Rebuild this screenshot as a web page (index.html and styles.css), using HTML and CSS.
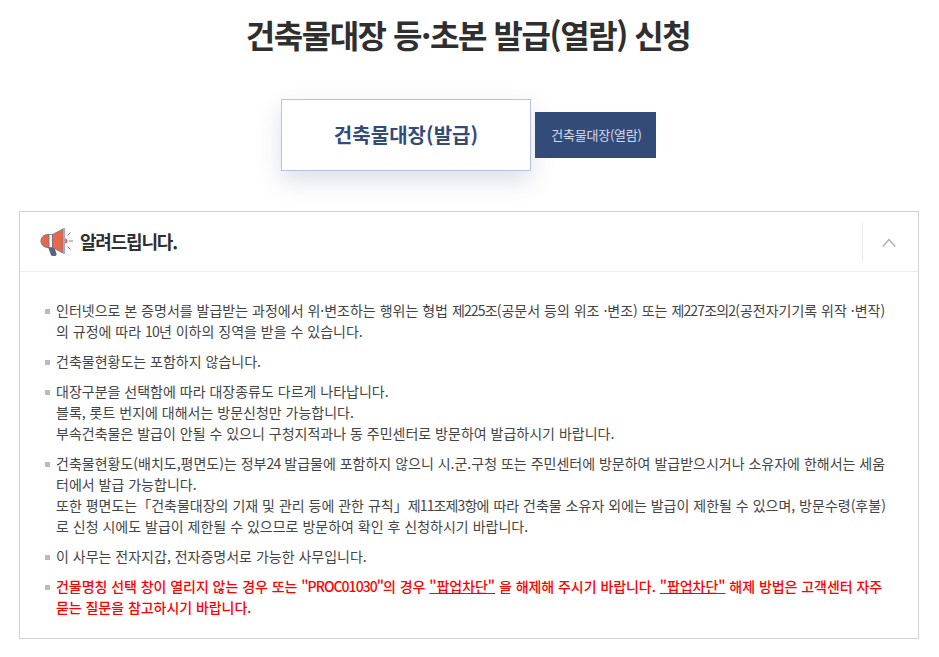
FILE: index.html
```
<!DOCTYPE html>
<html lang="ko">
<head>
<meta charset="utf-8">
<title>건축물대장 등·초본 발급(열람) 신청</title>
<link rel="stylesheet" href="styles.css">
</head>
<body>
<h1 class="title">건축물대장 등·초본 발급(열람) 신청</h1>
<div class="tabs">
  <a class="tab tab-on">건축물대장(발급)</a>
  <a class="tab tab-off">건축물대장(열람)</a>
</div>
<section class="notice">
  <header class="notice-head">
    <svg class="mega" viewBox="0 0 33 28" width="33" height="28">
      <path d="M8 19h6l2.500 6.500c.5 1.500-.5 2.500-2 2.500h-1.500c-1.200 0-2-.6-2.400-2z" fill="#5b6478"/>
      <path d="M8 6.500h1.500v13H8c-4 0-7-2.800-7-6.500s3-6.500 7-6.500z" fill="#e8694a" stroke="#6a7288" stroke-width="1"/>
      <path d="M9 6.500h3.500v13H9z" fill="#f4f4f4" stroke="#6a7288" stroke-width=".8"/>
      <path d="M12.500 6.500L23 1v24L12.500 19.500z" fill="#e8694a" stroke="#6a7288" stroke-width=".8"/>
      <path d="M23 0h2.200v26H23z" fill="#a9adba"/>
      <path d="M25.200 10.500c1.600.3 2.300 1.300 2.300 2.500s-.7 2.200-2.300 2.500z" fill="#e8594a"/>
      <path d="M27.500 7.500l3-3M29 13h4M27.500 18.500l3 3" stroke="#7a8298" stroke-width="1" fill="none"/>
    </svg>
    <h2 class="notice-title">알려드립니다.</h2>
    <button class="toggle" aria-label="접기">
      <svg viewBox="0 0 14 9" width="14" height="9"><path d="M.7 8.500L7 1.500l6.300 7" fill="none" stroke="#aaa" stroke-width="1.200"/></svg>
    </button>
  </header>
  <ul class="notice-list">
    <li>인터넷으로 본 증명서를 발급받는 과정에서 위·변조하는 행위는 형법 <span class="lat">제225조</span>(공문서 등의 위조 ·변조) 또는 <span class="lat">제227조의2</span>(공전자기기록 위작 ·변작)의 규정에 따라 <span class="lat">10</span>년 이하의 징역을 받을 수 있습니다.</li>
    <li>건축물현황도는 포함하지 않습니다.</li>
    <li>대장구분을 선택함에 따라 대장종류도 다르게 나타납니다.<br>블록, 롯트 번지에 대해서는 방문신청만 가능합니다.<br>부속건축물은 발급이 안될 수 있으니 구청지적과나 동 주민센터로 방문하여 발급하시기 바랍니다.</li>
    <li>건축물현황도(배치도,평면도)는 정부<span class="lat">24</span> 발급물에 포함하지 않으니 시.군.구청 또는 주민센터에 방문하여 발급받으시거나 소유자에 한해서는 세움터에서 발급 가능합니다.<br>또한 평면도는「건축물대장의 기재 및 관리 등에 관한 규칙」<span class="lat">제11조제3항</span>에 따라 건축물 소유자 외에는 발급이 제한될 수 있으며, 방문수령(후불)로 신청 시에도 발급이 제한될 수 있으므로 방문하여 확인 후 신청하시기 바랍니다.</li>
    <li>이 사무는 전자지갑, 전자증명서로 가능한 사무입니다.</li>
    <li class="warn">건물명칭 선택 창이 열리지 않는 경우 또는 <span class="lat">"PROC01030"</span>의 경우 <u>"팝업차단"</u> 을 해제해 주시기 바랍니다. <u>"팝업차단"</u> 해제 방법은 고객센터 자주 묻는 질문을 참고하시기 바랍니다.</li>
  </ul>
</section>
</body>
</html>
```
FILE: styles.css
```
* { box-sizing: border-box; }
html, body { margin: 0; padding: 0; background: #fff; }
body {
  font-family: "Noto Sans CJK KR", "Noto Sans", sans-serif;
  color: #333;
  height: 657px;
  overflow: hidden;
}
.title {
  margin: 0;
  padding: 10px 3px 0 0;
  height: 99px;
  text-align: center;
  font-size: 32px;
  line-height: 48px;
  font-weight: 700;
  letter-spacing: -1.45px;
  color: #2f2f2f;
}
.tabs {
  display: flex;
  align-items: center;
  margin-left: 281px;
  gap: 4px;
  height: 72px;
}
.tab { display: flex; align-items: center; justify-content: center; }
.tab-on {
  width: 250px;
  height: 72px;
  padding-bottom: 1px;
  background: #fff;
  border: 1px solid #b8c2dc;
  box-shadow: 0 10px 24px rgba(60, 75, 120, .18);
  color: #334b78;
  font-size: 20px;
  font-weight: 700;
  letter-spacing: .05px;
}
.tab-off {
  width: 121px;
  height: 46px;
  padding: 0 0 2px 2px;
  background: #334b78;
  color: #d5dbe8;
  font-size: 13px;
  letter-spacing: -.25px;
}
.notice {
  margin: 40px 20px 0 19px;
  border: 1px solid #d2d2d2;
  height: 428px;
}
.notice-head {
  display: flex;
  align-items: center;
  height: 60px;
  border-bottom: 1px solid #ececec;
  padding-left: 20px;
}
.mega { display: block; margin-right: 7px; }
.notice-title {
  margin: 0 0 2px;
  font-size: 18px;
  font-weight: 700;
  letter-spacing: -1.2px;
  color: #2f2f2f;
}
.toggle {
  margin-left: auto;
  width: 56px;
  height: 40px;
  background: none;
  border: 0;
  border-left: 1px solid #ececec;
  padding: 2px 4px 0 0;
  display: flex;
  align-items: center;
  justify-content: center;
}
.notice-list {
  list-style: none;
  margin: 0;
  padding: 28px 30px 0 36px;
  font-size: 14px;
  line-height: 21px;
  letter-spacing: 0;
  color: #444;
}
.lat { letter-spacing: -.85px; }
.notice-list li { position: relative; margin-bottom: 9px; }
.notice-list li::before {
  content: "";
  position: absolute;
  left: -11px;
  top: 9px;
  width: 5px;
  height: 5px;
  background: #bbb;
}
.notice-list .warn { color: #f00; font-weight: 500; letter-spacing: -.05px; }
.notice-list .warn .lat { letter-spacing: -.95px; }
```
